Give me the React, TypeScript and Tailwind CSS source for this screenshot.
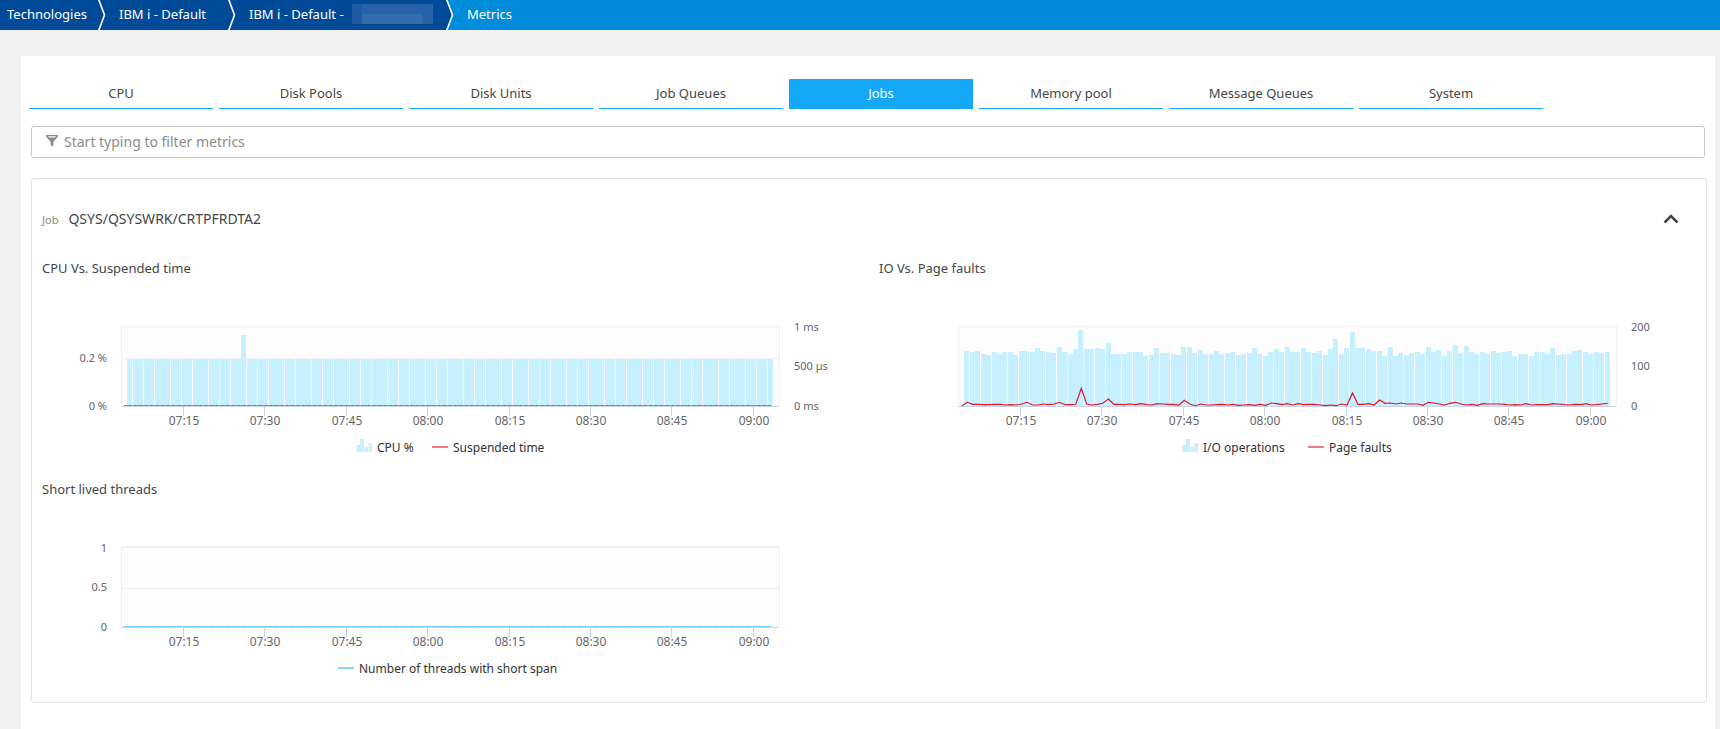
import React, { useState } from 'react';

const crumbs = [
  { label: 'Technologies', className: 'w-[98px] pl-[7px]' },
  { label: 'IBM i - Default', className: 'w-[122px] pl-[13px]' },
];

const tabs = [
  'CPU',
  'Disk Pools',
  'Disk Units',
  'Job Queues',
  'Jobs',
  'Memory pool',
  'Message Queues',
  'System',
];

const times = ['07:15', '07:30', '07:45', '08:00', '08:15', '08:30', '08:45', '09:00'];

// plot area inside each chart svg
const LEFT = 79;
const RIGHT = 737;
const TOP = 48;
const AXIS = 128;
const STEP = 5.425;
const LINE_START = 82;

// one value per minute, 80 = full plot height
const cpu = Array.from({ length: 119 }, (_, i) => (i === 21 ? 71 : 47));

const io = [
  55, 54, 55, 52, 51, 54, 52, 54, 54, 51, 55, 55, 54, 58, 55, 54, 53, 59, 54, 52,
  57, 76, 57, 57, 58, 57, 63, 52, 52, 52, 54, 54, 54, 50, 51, 58, 53, 53, 52, 51,
  59, 59, 53, 56, 52, 52, 55, 52, 53, 54, 51, 52, 53, 58, 52, 50, 54, 57, 54, 59,
  54, 54, 58, 54, 53, 55, 51, 57, 67, 52, 58, 74, 58, 58, 57, 55, 55, 50, 59, 50,
  53, 51, 53, 54, 52, 59, 54, 56, 50, 55, 61, 53, 60, 54, 52, 54, 52, 55, 53, 54,
  55, 50, 52, 52, 50, 54, 54, 52, 58, 51, 52, 52, 55, 56, 54, 52, 54, 53, 54,
];

// 240 = full plot height
const faults = [
  1, 11, 5, 5, 4, 4, 5, 5, 3, 4, 3, 6, 11, 3, 3, 6, 4, 6, 11, 4,
  4, 5, 53, 6, 3, 5, 8, 21, 5, 5, 4, 6, 4, 7, 4, 3, 7, 6, 5, 5,
  3, 17, 6, 1, 6, 3, 3, 4, 5, 3, 5, 2, 3, 4, 2, 5, 2, 9, 7, 4,
  7, 3, 7, 4, 5, 5, 3, 1, 3, 1, 6, 3, 39, 5, 5, 7, 3, 18, 8, 9,
  6, 9, 6, 6, 6, 2, 11, 9, 6, 3, 8, 11, 6, 3, 5, 2, 7, 6, 6, 6,
  5, 3, 4, 3, 7, 3, 4, 4, 4, 7, 6, 4, 3, 5, 4, 7, 3, 4, 6, 8,
];

const CrumbArrow: React.FC<{ next: string }> = ({ next }) => (
  <svg width="8" height="30" viewBox="0 0 8 30" className="bg-[#004a98]" aria-hidden="true">
    <path d="M0 0L6.5 15L0 30H8V0Z" fill={next} />
    <path d="M0.5 -1L6.5 15L0.5 31" fill="none" stroke="#fff" strokeWidth="1.6" />
  </svg>
);

const Bars: React.FC<{ data: number[] }> = ({ data }) => (
  <g fill="#c7f0ff">
    {data.map((h, i) => (
      <rect key={i} x={Math.round(85.45 + STEP * i)} y={AXIS - h} width="5" height={h} />
    ))}
  </g>
);

const Frame: React.FC<{ grid?: number }> = ({ grid }) => (
  <g shapeRendering="crispEdges">
    <rect x={LEFT} y={TOP} width={RIGHT - LEFT + 1} height={AXIS - TOP} fill="#fdfdfd" />
    {grid && <rect x={LEFT} y={grid} width={RIGHT - LEFT} height="1" fill="#f0f0f0" />}
    <rect x={LEFT} y={TOP} width={RIGHT - LEFT + 1} height="1" fill="#f0f0f0" />
    <rect x={LEFT} y={TOP} width="1" height={AXIS - TOP} fill="#f0f0f0" />
    <rect x={RIGHT} y={TOP} width="1" height={AXIS - TOP} fill="#f0f0f0" />
  </g>
);

const TimeAxis: React.FC = () => (
  <g>
    <rect x={LEFT} y={AXIS} width={RIGHT - LEFT} height="1" fill="#c8d2e8" />
    {times.map((t, i) => {
      const x = Math.floor(141.3 + 81.43 * i);
      return (
        <g key={t}>
          <rect x={x} y={AXIS} width="1" height="10" fill="#c8d2e8" />
          <text x={x + 1} y="147" textAnchor="middle" className="fill-[#666666] text-[12px]">{t}</text>
        </g>
      );
    })}
  </g>
);

// series that stays at zero, with a darker dot for every sample
const FlatLine: React.FC<{ color: string; dot: string }> = ({ color, dot }) => (
  <g>
    <rect x={LINE_START} y={AXIS - 1} width="647" height="1" fill={color} />
    <path d={`M${LINE_START} ${AXIS - 0.5}H729`} stroke={dot} strokeDasharray="1 4.425" />
  </g>
);

type Label = { text: string; y: number };

const AxisLabels: React.FC<{ labels: Label[]; side: 'left' | 'right' }> = ({ labels, side }) => (
  <g className="fill-[#666666] text-[11px]">
    {labels.map(({ text, y }) => (
      <text key={text} x={side === 'left' ? 65 : 752} y={y} textAnchor={side === 'left' ? 'end' : 'start'}>
        {text}
      </text>
    ))}
  </g>
);

const BarLegend: React.FC<{ x: number; label: string }> = ({ x, label }) => (
  <g>
    <g fill="#c7f0ff">
      <rect x={x + 1} y="167" width="3" height="7" />
      <rect x={x + 4} y="161" width="4" height="13" />
      <rect x={x + 9} y="169" width="3" height="5" />
      <rect x={x + 13} y="165" width="3" height="9" />
    </g>
    <g fill="#e6f8ff">
      <rect x={x} y="167" width="1" height="7" />
      <rect x={x + 8} y="169" width="1" height="5" />
      <rect x={x + 12} y="165" width="1" height="9" />
    </g>
    <text x={x + 21} y="174" className="fill-[#333333] text-[12px]">{label}</text>
  </g>
);

const LineLegend: React.FC<{ x: number; label: string; color: string }> = ({ x, label, color }) => (
  <g>
    <rect x={x} y="168" width="16" height="2" fill={color} />
    <text x={x + 21} y="174" className="fill-[#333333] text-[12px]">{label}</text>
  </g>
);

const Chart: React.FC<{ title: string; children: React.ReactNode }> = ({ title, children }) => (
  <figure>
    <figcaption className="text-[13px] leading-5">{title}</figcaption>
    <svg viewBox="0 0 827 180" className="block h-auto w-full" role="img" aria-label={title}>
      {children}
    </svg>
  </figure>
);

const App: React.FC = () => {
  const [active, setActive] = useState('Jobs');
  const [open, setOpen] = useState(true);

  const faultPoints = faults
    .map((v, i) => `${(LINE_START + 0.9 + STEP * i).toFixed(1)},${(AXIS - v / 3).toFixed(1)}`)
    .join(' ');

  return (
    <div className="min-h-screen bg-[#f1f1f1] font-['Noto_Sans','Open_Sans',sans-serif] text-[14px] text-[#454646]">
      <nav className="flex h-[30px] bg-[#008cdb] text-[13px] leading-[28px] text-white" aria-label="Breadcrumb">
        {crumbs.map((c) => (
          <React.Fragment key={c.label}>
            <a href="#" className={`bg-[#004a98] whitespace-nowrap ${c.className}`}>{c.label}</a>
            <CrumbArrow next="#004a98" />
          </React.Fragment>
        ))}
        <a href="#" className="flex w-[210px] items-start bg-[#004a98] pl-[13px] whitespace-nowrap">
          <span className="w-[103px]">IBM i - Default -</span>
          <span className="mt-1 flex h-5 w-[81px] bg-[#2763a9]">
            <span className="w-[10px] bg-[#1d5ba5]" />
            <span className="mt-[10px] w-[60px] bg-[#336dae]" />
          </span>
        </a>
        <CrumbArrow next="#008cdb" />
        <a href="#" className="pl-[13px]">Metrics</a>
      </nav>

      <main className="mt-[26px] mr-[5px] ml-[21px] bg-white pt-[23px] pb-[27px]">
        <div className="flex gap-[6px] pl-2" role="tablist">
          {tabs.map((tab) => (
            <button
              key={tab}
              role="tab"
              aria-selected={tab === active}
              onClick={() => setActive(tab)}
              className={`h-[30px] w-[184px] cursor-pointer border-b border-[#14a8f5] text-[13px] ${
                tab === active ? 'bg-[#14a8f5] text-white' : ''
              }`}
            >
              {tab}
            </button>
          ))}
        </div>

        <label className="mt-[17px] mr-[10px] ml-[10px] flex h-8 items-center gap-[6px] rounded-[3px] border border-[#c8c8c8] pb-[2px] pl-[14px]">
          <svg width="12" height="12" viewBox="0 0 12 12" aria-hidden="true">
            <path d="M0 0H12V1.5L7.3 7V12L4.7 10V7L0 1.5ZM2 1.3L3 2.5H9L10 1.3Z" fill="#8c8c8c" fillRule="evenodd" />
          </svg>
          <input
            type="text"
            aria-label="Filter metrics"
            placeholder="Start typing to filter metrics"
            className="flex-1 outline-none placeholder:text-[#8c8c8c]"
          />
        </label>

        <section className="mt-5 mr-2 ml-[10px] rounded-[3px] border border-[#dfe3e3] pb-[23px] pl-[10px]">
          <div className="flex items-center justify-between pt-[30px] pr-[27px]">
            <h2 className="flex items-baseline gap-[10px] leading-5">
              <span className="text-[11px] text-[#898989]">Job</span>
              <span>QSYS/QSYSWRK/CRTPFRDTA2</span>
            </h2>
            <button aria-label="Toggle charts" aria-expanded={open} onClick={() => setOpen(!open)} className="cursor-pointer pb-[2px]">
              <svg width="16" height="10" viewBox="0 0 16 10" className={open ? '' : 'rotate-180'}>
                <path d="M1.5 8.5L8 2L14.5 8.5" fill="none" stroke="#454646" strokeWidth="2.6" />
              </svg>
            </button>
          </div>

          {open && (
            <div className="mt-7 grid grid-cols-2 gap-x-[10px] gap-y-[21px]">
              <Chart title="CPU Vs. Suspended time">
                <Frame grid={80} />
                <Bars data={cpu} />
                <TimeAxis />
                <FlatLine color="#e8727b" dot="#c9303c" />
                <AxisLabels side="left" labels={[{ text: '0.2 %', y: 84 }, { text: '0 %', y: 132 }]} />
                <AxisLabels side="right" labels={[{ text: '1 ms', y: 53 }, { text: '500 µs', y: 92 }, { text: '0 ms', y: 132 }]} />
                <BarLegend x={314} label="CPU %" />
                <LineLegend x={390} label="Suspended time" color="#f07c80" />
              </Chart>

              <Chart title="IO Vs. Page faults">
                <Frame />
                <Bars data={io} />
                <TimeAxis />
                <polyline points={faultPoints} fill="none" stroke="#dc172a" strokeWidth="1.2" />
                <AxisLabels side="right" labels={[{ text: '200', y: 53 }, { text: '100', y: 92 }, { text: '0', y: 132 }]} />
                <BarLegend x={303} label="I/O operations" />
                <LineLegend x={429} label="Page faults" color="#f07c80" />
              </Chart>

              <Chart title="Short lived threads">
                <Frame grid={89} />
                <rect x={LEFT} y={TOP - 1} width={RIGHT - LEFT} height="1" fill="#f0f0f0" />
                <TimeAxis />
                <FlatLine color="#84d0f8" dot="#5fb8ea" />
                <AxisLabels side="left" labels={[{ text: '1', y: 53 }, { text: '0.5', y: 92 }, { text: '0', y: 132 }]} />
                <LineLegend x={296} label="Number of threads with short span" color="#84d5fb" />
              </Chart>
            </div>
          )}
        </section>
      </main>
    </div>
  );
};

export default App;
